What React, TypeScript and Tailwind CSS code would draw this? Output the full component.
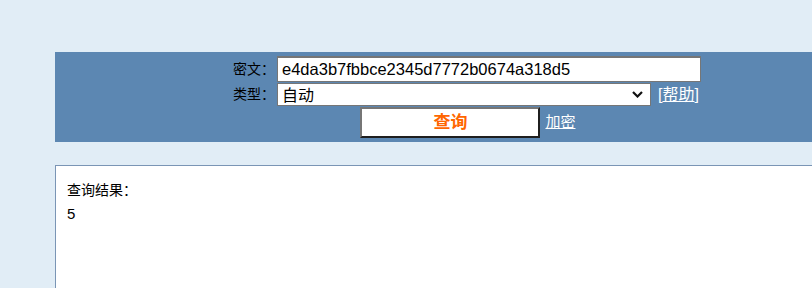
import React from "react";

export default function App() {
    return (
        <div
            className="h-[288px] w-[812px] overflow-hidden bg-[#e1edf6] pt-[52px] pl-[55px]"
            style={{ fontFamily: '"Liberation Sans", "Noto Sans CJK SC", sans-serif' }}
        >
            {/* query form */}
            <div className="w-[824px] bg-[#5c87b2] pt-[4px] pb-[4px]">
                <div className="mx-auto grid w-fit grid-cols-[auto_auto] gap-x-[2px] gap-y-[1px] text-[14px] text-black">
                    <div className="flex h-[26px] items-center justify-end">密文：</div>
                    <input
                        className="h-[26px] w-[424px] border border-t-2 border-[#767676] bg-white pl-[4px] text-[16.5px] text-black outline-none"
                        defaultValue="e4da3b7fbbce2345d7772b0674a318d5"
                    />

                    <div className="flex h-[23px] items-center justify-end">类型：</div>
                    <div className="flex h-[23px] items-center gap-[7px]">
                        <div className="relative h-[23px] w-[374px]">
                            <select className="h-[23px] w-full appearance-none border border-[#767676] bg-white pl-[4px] text-[16px] text-black outline-none">
                                <option>自动</option>
                            </select>
                            <svg
                                className="pointer-events-none absolute top-[8px] right-[8px]"
                                width="11"
                                height="7"
                                viewBox="0 0 11 7"
                            >
                                <path d="M1 1l4.5 4.5L10 1" fill="none" stroke="#111" strokeWidth="2.2" />
                            </svg>
                        </div>
                        <span className="text-[16px] text-white">
                            [<a href="#" className="underline">帮助</a>]
                        </span>
                    </div>

                    <div className="col-span-2 flex h-[31px] items-center justify-center gap-[5px] pl-[2px]">
                        <button className="h-[31px] w-[180px] border-2 border-t-[#767676] border-l-[#767676] border-b-[#1f1f1f] border-r-[#1f1f1f] bg-white text-[17px] font-bold text-[#ff6600]">
                            查询
                        </button>
                        <a href="#" className="text-[15px] text-white underline">加密</a>
                    </div>
                </div>
            </div>

            {/* result */}
            <div className="mt-[23px] h-[200px] w-[824px] border border-[#7a95b5] bg-white pt-[13px] pl-[11px] text-[14px] leading-[23px] text-black">
                <div>查询结果：</div>
                <div className="text-[15px]">5</div>
            </div>
        </div>
    );
}
